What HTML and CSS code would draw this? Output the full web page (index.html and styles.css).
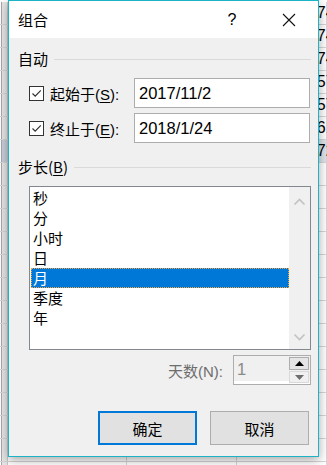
FILE: index.html
```html
<!DOCTYPE html>
<html lang="zh-CN">
<head>
  <meta charset="UTF-8" />
  <meta name="viewport" content="width=device-width, initial-scale=1.0" />
  <title>组合</title>
  <link rel="stylesheet" href="styles.css">
</head>
<body>

  <div class="sheet">
    <div class="sheet-row"><span class="row-head"></span><span class="cell"></span><span class="cell"></span><span class="cell num">2574</span></div>
    <div class="sheet-row"><span class="row-head"></span><span class="cell"></span><span class="cell"></span><span class="cell num">2574</span></div>
    <div class="sheet-row"><span class="row-head"></span><span class="cell"></span><span class="cell"></span><span class="cell num">2774</span></div>
    <div class="sheet-row"><span class="row-head"></span><span class="cell"></span><span class="cell"></span><span class="cell num">2557</span></div>
    <div class="sheet-row"><span class="row-head"></span><span class="cell"></span><span class="cell"></span><span class="cell num">2557</span></div>
    <div class="sheet-row"><span class="row-head"></span><span class="cell"></span><span class="cell"></span><span class="cell num">2561</span></div>
    <div class="sheet-row active"><span class="row-head"></span><span class="cell"></span><span class="cell"></span><span class="cell num">2572</span></div>
    <div class="sheet-row"><span class="row-head"></span><span class="cell"></span><span class="cell"></span><span class="cell"></span></div>
    <div class="sheet-row"><span class="row-head"></span><span class="cell"></span><span class="cell"></span><span class="cell"></span></div>
    <div class="sheet-row"><span class="row-head"></span><span class="cell"></span><span class="cell"></span><span class="cell"></span></div>
    <div class="sheet-row"><span class="row-head"></span><span class="cell"></span><span class="cell"></span><span class="cell"></span></div>
    <div class="sheet-row"><span class="row-head"></span><span class="cell"></span><span class="cell"></span><span class="cell"></span></div>
    <div class="sheet-row"><span class="row-head"></span><span class="cell"></span><span class="cell"></span><span class="cell"></span></div>
    <div class="sheet-row"><span class="row-head"></span><span class="cell"></span><span class="cell"></span><span class="cell"></span></div>
    <div class="sheet-row"><span class="row-head"></span><span class="cell"></span><span class="cell"></span><span class="cell"></span></div>
    <div class="sheet-row"><span class="row-head"></span><span class="cell"></span><span class="cell"></span><span class="cell"></span></div>
    <div class="sheet-row"><span class="row-head"></span><span class="cell"></span><span class="cell"></span><span class="cell"></span></div>
    <div class="sheet-row"><span class="row-head"></span><span class="cell"></span><span class="cell"></span><span class="cell"></span></div>
    <div class="sheet-row"><span class="row-head"></span><span class="cell"></span><span class="cell"></span><span class="cell"></span></div>
    <div class="sheet-row"><span class="row-head"></span><span class="cell"></span><span class="cell"></span><span class="cell"></span></div>
    <div class="sheet-row"><span class="row-head"></span><span class="cell"></span><span class="cell"></span><span class="cell"></span></div>
  </div>

  <div class="dialog">
    <div class="title-bar">
      <span class="title">组合</span>
      <span class="help">?</span>
      <span class="close">
        <svg width="14" height="14" viewBox="0 0 14 14"><path d="M1 1 L13 13 M13 1 L1 13" stroke="#111" stroke-width="1.1" fill="none"/></svg>
      </span>
    </div>

    <div class="body">
      <div class="group-head"><span>自动</span><span class="rule"></span></div>

      <div class="field">
        <span class="check">
          <svg width="13" height="13" viewBox="0 0 13 13"><path d="M2.5 6.5 L5.2 9.2 L10.8 3.3" stroke="#333" stroke-width="1.2" fill="none"/></svg>
        </span>
        <span class="label">起始于(<u>S</u>):</span>
        <span class="text-box">2017/11/2</span>
      </div>
      <div class="field second">
        <span class="check">
          <svg width="13" height="13" viewBox="0 0 13 13"><path d="M2.5 6.5 L5.2 9.2 L10.8 3.3" stroke="#333" stroke-width="1.2" fill="none"/></svg>
        </span>
        <span class="label">终止于(<u>E</u>):</span>
        <span class="text-box">2018/1/24</span>
      </div>

      <div class="group-head step"><span>步长(<u>B</u>)</span><span class="rule"></span></div>

      <div class="list-box">
        <ul class="items">
          <li>秒</li>
          <li>分</li>
          <li>小时</li>
          <li>日</li>
          <li class="selected">月</li>
          <li>季度</li>
          <li>年</li>
        </ul>
        <div class="scroll">
          <svg width="13" height="8" viewBox="0 0 13 8"><path d="M1.5 6.5 L6.5 1.5 L11.5 6.5" stroke="#c2c2c2" stroke-width="1.6" fill="none"/></svg>
          <svg width="13" height="8" viewBox="0 0 13 8"><path d="M1.5 1.5 L6.5 6.5 L11.5 1.5" stroke="#c2c2c2" stroke-width="1.6" fill="none"/></svg>
        </div>
      </div>

      <div class="days">
        <span class="days-label">天数(N):</span>
        <div class="spin">
          <span class="spin-value">1</span>
          <div class="spin-buttons">
            <span class="spin-up"><svg width="9" height="5" viewBox="0 0 9 5"><path d="M0 5 L4.5 0 L9 5 Z" fill="#000"/></svg></span>
            <span class="spin-down"><svg width="9" height="5" viewBox="0 0 9 5"><path d="M0 0 L4.5 5 L9 0 Z" fill="#6d6d6d"/></svg></span>
          </div>
        </div>
      </div>

      <div class="actions">
        <button class="btn default">确定</button>
        <button class="btn">取消</button>
      </div>
    </div>
  </div>

</body>
</html>
```

FILE: styles.css
```css
body {
  margin: 0;
  width: 327px;
  height: 465px;
  overflow: hidden;
  position: relative;
  background: #fff;
  font-family: "Noto Sans CJK SC", sans-serif;
  color: #000;
}
.sheet {
  padding-top: 2px;
}
.sheet-row {
  display: grid;
  grid-template-columns: 8px 119px 110px 90px;
  height: 23px;
  box-sizing: border-box;
  border-bottom: 1px solid #d6d6d6;
}
.sheet-row.active .row-head {
  background: #c6cfdc;
}
.sheet-row.active .cell {
  background: #dde3ea;
}
.row-head {
  background: #e6e6e6;
  border-left: 1px solid #a8a8a8;
  margin-left: 1px;
  border-right: 1px solid #c8c8c8;
}
.cell {
  border-right: 1px solid #d6d6d6;
  overflow: visible;
  white-space: nowrap;
}
.num {
  font-family: "Liberation Sans", sans-serif;
  font-size: 16px;
  line-height: 22px;
  padding-left: 62px;
}
.dialog {
  position: absolute;
  left: 8px;
  top: 0;
  width: 311px;
  height: 457px;
  box-sizing: border-box;
  border: 1px solid #1ab4c6;
  background: #f0f0f0;
  box-shadow: 0 3px 10px rgba(0, 0, 0, 0.35);
  display: flex;
  flex-direction: column;
}
.title-bar {
  height: 37px;
  flex: none;
  background: #fff;
  display: flex;
  align-items: center;
  padding-left: 9px;
  font-size: 15px;
}
.title {
  flex: 1;
}
.help {
  width: 30px;
  text-align: center;
  margin-right: 27px;
  font-family: "Liberation Sans", sans-serif;
  font-size: 16px;
}
.close {
  width: 30px;
  margin-right: 14px;
  display: flex;
  justify-content: center;
}
.body {
  padding: 0 7px 0 9px;
  font-size: 15px;
}
.group-head {
  display: flex;
  align-items: center;
  gap: 6px;
  height: 20px;
  line-height: 20px;
  margin-top: 11px;
}
.group-head.step {
  margin-top: 14px;
}
.rule {
  flex: 1;
  border-top: 1px solid #dadada;
}
u {
  text-underline-offset: 2px;
}
.field {
  display: flex;
  align-items: center;
  margin-top: 9px;
  padding-left: 11px;
}
.field.second {
  margin-top: 5px;
}
.check {
  width: 13px;
  height: 13px;
  border: 1px solid #333;
  background: #fff;
  display: flex;
}
.label {
  margin-left: 6px;
  width: 84px;
  font-family: "Liberation Sans", "Noto Sans CJK SC", sans-serif;
}
.text-box {
  width: 176px;
  height: 30px;
  box-sizing: border-box;
  border: 1px solid #adadad;
  background: #fff;
  padding-left: 4px;
  font-family: "Liberation Sans", sans-serif;
  font-size: 16.5px;
  line-height: 28px;
}
.list-box {
  margin: 9px 0 0 11px;
  height: 164px;
  box-sizing: border-box;
  border: 1px solid #828790;
  background: #fff;
  display: flex;
}
.items {
  list-style: none;
  margin: 0;
  padding: 1px 0 0 1px;
  flex: 1;
}
.items li {
  height: 20px;
  line-height: 20px;
  padding-left: 2px;
}
.items li.selected {
  background: #0078d7;
  color: #fff;
  outline: 1px dotted #f4a340;
  outline-offset: -1px;
}
.scroll {
  width: 21px;
  background: #f0f0f0;
  display: flex;
  flex-direction: column;
  justify-content: space-between;
  align-items: center;
  padding: 11px 0 8px;
  box-sizing: border-box;
}
.days {
  display: flex;
  justify-content: flex-end;
  align-items: center;
  margin-top: 5px;
}
.days-label {
  color: #6d6d6d;
  margin-right: 10px;
  font-family: "Liberation Sans", "Noto Sans CJK SC", sans-serif;
}
.spin {
  width: 78px;
  height: 30px;
  box-sizing: border-box;
  border: 1px solid #adadad;
  background: #f0f0f0;
  box-shadow: inset 0 -3px 0 #fff;
  display: flex;
}
.spin-value {
  flex: 1;
  padding-left: 3px;
  color: #8a8a8a;
  font-family: "Liberation Sans", sans-serif;
  font-size: 16.5px;
  line-height: 26px;
}
.spin-buttons {
  width: 20px;
  margin: 1px 1px 0 0;
  display: flex;
  flex-direction: column;
  gap: 1px;
}
.spin-buttons span {
  height: 12px;
  box-sizing: border-box;
  display: flex;
  align-items: center;
  justify-content: center;
}
.spin-up {
  border: 1px solid #adadad;
  background: #e5e5e5;
  height: 13px !important;
}
.spin-down {
  border: 1px solid #d9d9d9;
  background: #f0f0f0;
}
.actions {
  display: flex;
  justify-content: flex-end;
  gap: 13px;
  margin-top: 26px;
  padding-right: 2px;
}
.btn {
  width: 99px;
  height: 34px;
  box-sizing: border-box;
  border: 1px solid #adadad;
  background: #e1e1e1;
  font-family: "Noto Sans CJK SC", sans-serif;
  font-size: 15px;
  color: #000;
  padding: 0;
}
.btn.default {
  border: 2px solid #0078d7;
}
```
